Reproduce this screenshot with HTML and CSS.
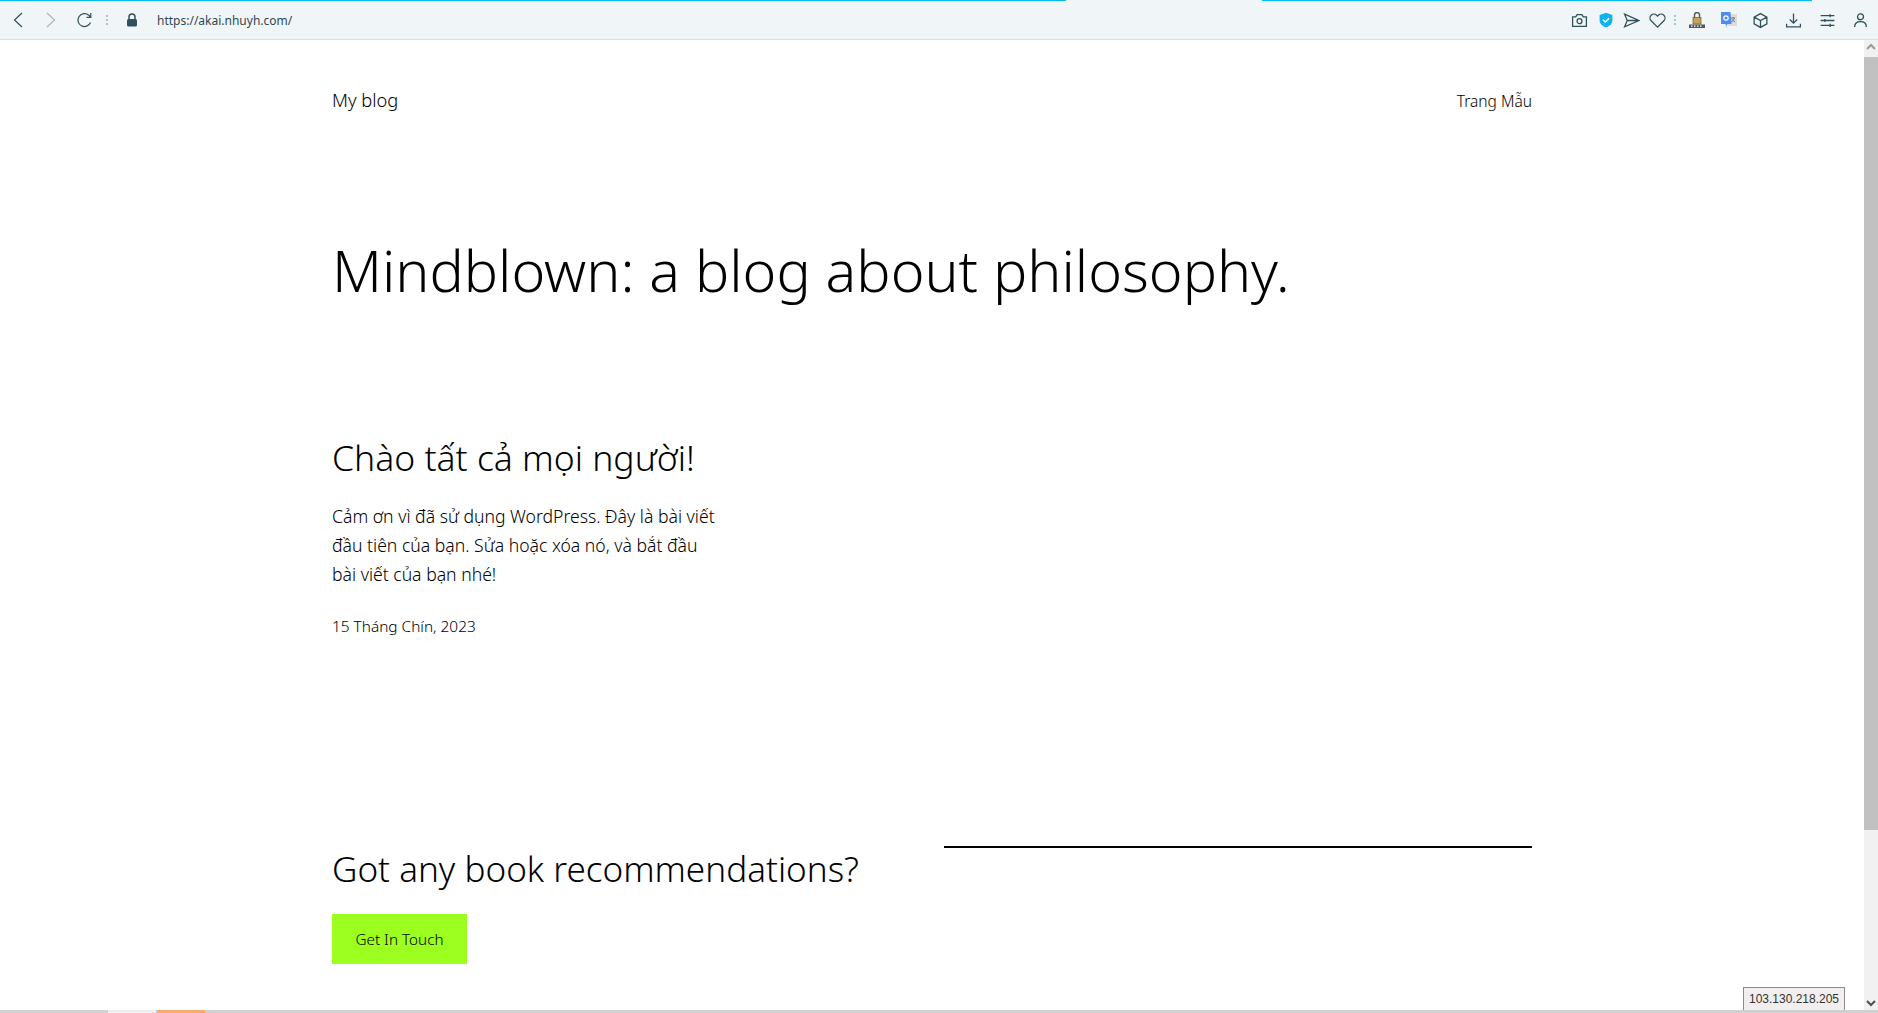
FILE: index.html
```html
<!DOCTYPE html>
<html lang="en">
<head>
    <meta charset="UTF-8">
    <meta name="viewport" content="width=device-width, initial-scale=1.0">
    <title>My blog</title>
    <link rel="stylesheet" href="styles.css">
</head>
<body>
    <div class="app">
        <!-- Browser toolbar -->
        <div class="toolbar">
            <div class="progress">
                <span class="progress-a"></span>
                <span class="progress-b"></span>
            </div>
            <div class="toolbar-row">
                <div class="nav-icons">
                    <svg class="icon back" viewBox="0 0 16 16"><path d="M12 1 4.500 8l7.500 7"/></svg>
                    <svg class="icon forward" viewBox="0 0 16 16"><path d="m4 1 7.500 7L4 15"/></svg>
                    <svg class="icon reload" viewBox="0 0 16 16"><path d="M14.500 10.500A6.500 6.500 0 1 1 12.800 3.200L14.500 5M14.800 1v4.300h-4.300"/></svg>
                    <span class="dots"></span>
                    <svg class="lock" viewBox="0 0 12 14"><path class="shackle" d="M3 6.500V4a3 3 0 0 1 6 0v2.500"/><rect x="1" y="6" width="10" height="7.500" rx="1.500"/></svg>
                    <span class="url">https://akai.nhuyh.com/</span>
                </div>
                <div class="tool-icons">
                    <svg class="icon camera" viewBox="0 0 16 16"><path d="M1.500 4.500h3l1.200-2h4.600l1.200 2h3v9h-13z"/><circle cx="8" cy="8.600" r="2.300"/></svg>
                    <svg class="shield" viewBox="0 0 14 16"><path d="M7 .8 13.400 3v5.400c0 3.400-2.800 5.700-6.400 6.900C3.400 14.100.6 11.800.6 8.400V3z"/><path class="tick" d="m4 7.800 2.200 2.200L10 6.400"/></svg>
                    <svg class="icon send" viewBox="0 0 16 16"><path d="M1.500 2 15 8 1.500 14 4 8zM4 8h11"/></svg>
                    <svg class="icon heart" viewBox="0 0 16 16"><path d="M8 14.200 2 8.300a3.700 3.700 0 0 1 0-5.200 3.700 3.700 0 0 1 5.200 0l.8.800.8-.8a3.700 3.700 0 0 1 5.200 0 3.700 3.700 0 0 1 0 5.200z"/></svg>
                    <span class="dots"></span>
                    <svg class="ext-lock" viewBox="0 0 16 16"><path class="ext-shackle" d="M5.500 6V3a2.500 2.500 0 0 1 5 0v3"/><rect x="4" y="5.500" width="8" height="6.500" fill="#c9a24f" stroke="#6b5a35" stroke-width=".7"/><rect x="0" y="12.500" width="16" height="3.500" fill="#55565c"/><path d="M2 14.200h1.500M5 14.200h1.500M8 14.200h1.500M11 14.200h1.500" stroke="#fff" stroke-width="1.200"/></svg>
                    <svg class="ext-translate" viewBox="0 0 16 16"><rect x="7" y="2" width="9" height="12" fill="#dcdcdc"/><path d="m10 6 4 0m-2-1v1m1.500 0c-.5 2-2 3.500-3.500 4m1-3c.5 1 1.500 2 3 3" stroke="#666" stroke-width=".8" fill="none"/><path d="M0 0h9.500l1 12H7l-1.500 1V16l-1-4H0z" fill="#4f8bf0"/><circle cx="5" cy="6" r="2.200" fill="none" stroke="#fff" stroke-width="1.200"/></svg>
                    <svg class="icon box" viewBox="0 0 16 16"><path d="M8 1.500 14 4.800v6.400L8 14.500l-6-3.300V4.800zM2 4.800 8 8l6-3.200M8 8v6.500"/></svg>
                    <svg class="icon download" viewBox="0 0 16 16"><path d="M8 1.500v9M4.500 7 8 10.500 11.500 7M1.500 11v3h13v-3"/></svg>
                    <svg class="icon sliders" viewBox="0 0 16 16"><path d="M1.500 3.500h13M1.500 8h13M1.500 12.500h13M10.500 2v3M5.500 6.500v3M10.500 11v3"/></svg>
                    <svg class="icon user" viewBox="0 0 16 16"><circle cx="8" cy="4.500" r="2.800"/><path d="M2.500 14c0-3 2.200-5 5.500-5s5.500 2 5.500 5"/></svg>
                </div>
            </div>
        </div>

        <div class="viewport">
            <div class="page">
                <header class="site-header">
                    <a class="site-title">My blog</a>
                    <a class="site-nav">Trang Mẫu</a>
                </header>

                <h1 class="tagline">Mindblown: a blog about philosophy.</h1>

                <div class="posts">
                    <article class="post">
                        <h2>Chào tất cả mọi người!</h2>
                        <p>Cảm ơn vì đã sử dụng WordPress. Đây là bài viết đầu tiên của bạn. Sửa hoặc xóa nó, và bắt đầu bài viết của bạn nhé!</p>
                        <div class="post-date">15 Tháng Chín, 2023</div>
                    </article>
                </div>

                <div class="cta">
                    <div class="cta-left">
                        <h2>Got any book recommendations?</h2>
                        <a class="button">Get In Touch</a>
                    </div>
                    <hr class="cta-rule">
                </div>
            </div>

            <div class="scrollbar">
                <svg class="arrow" viewBox="0 0 14 14"><path d="m3 9 4-4 4 4"/></svg>
                <div class="thumb"></div>
                <svg class="arrow arrow-down" viewBox="0 0 14 14"><path d="m3 5 4 4 4-4"/></svg>
            </div>
        </div>

        <div class="bottom-bar">
            <span class="seg-light"></span>
            <span class="seg-orange"></span>
        </div>

        <div class="ip-badge">103.130.218.205</div>
    </div>
</body>
</html>
```

FILE: styles.css
```css
* {
    margin: 0;
    padding: 0;
    box-sizing: border-box;
}

body {
    font-family: 'Noto Sans', 'Open Sans', sans-serif;
    font-weight: 300;
    background: #fff;
    color: #000;
    height: 100vh;
    overflow: hidden;
}

.app {
    height: 100vh;
    display: flex;
    flex-direction: column;
    position: relative;
}

/* toolbar */
.toolbar {
    height: 40px;
    flex: none;
    background: #f0f6f7;
    border-bottom: 1px solid #d8e2e4;
}

.progress {
    height: 1px;
    display: flex;
}

.progress-a {
    width: 1066px;
    background: #00bdea;
}

.progress-b {
    width: 550px;
    margin-left: 196px;
    background: #00bdea;
}

.toolbar-row {
    height: 38px;
    display: flex;
    justify-content: space-between;
    align-items: center;
    padding: 0 9px 0 10px;
}

.nav-icons,
.tool-icons {
    display: flex;
    align-items: center;
}

.icon {
    width: 16px;
    height: 16px;
    flex: none;
    fill: none;
    stroke: #32505a;
    stroke-width: 1.2;
}

.back {
    margin-right: 17px;
}

.forward {
    margin-right: 17px;
    stroke: #a8b6ba;
}

.reload {
    margin-right: 14px;
}

.dots {
    width: 2px;
    height: 10px;
    flex: none;
    background: repeating-linear-gradient(#b4c0c4 0 2px, transparent 2px 4px);
}

.nav-icons .dots {
    margin-right: 18px;
}

.lock {
    width: 12px;
    height: 14px;
    margin-right: 19px;
    fill: #32505a;
}

.shackle {
    fill: none;
    stroke: #32505a;
    stroke-width: 1.5;
}

.url {
    font-size: 12px;
    font-weight: 400;
    color: #32474f;
}

.tool-icons .icon {
    width: 17px;
    height: 17px;
}

.tool-icons .camera {
    margin-right: 11px;
}

.shield {
    width: 14px;
    height: 16px;
    margin-right: 10px;
    fill: #0fb4ee;
}

.tick {
    fill: none;
    stroke: #fff;
    stroke-width: 1.5;
}

.tool-icons .send {
    margin-right: 9px;
}

.tool-icons .heart {
    margin-right: 8px;
}

.tool-icons .dots {
    margin-right: 13px;
}

.ext-lock {
    width: 16px;
    height: 16px;
    margin-right: 16px;
}

.ext-shackle {
    fill: none;
    stroke: #555;
    stroke-width: 1.4;
}

.ext-translate {
    width: 16px;
    height: 16px;
    margin-right: 15px;
}

.tool-icons .box {
    margin-right: 16px;
}

.tool-icons .download {
    margin-right: 17px;
}

.tool-icons .sliders {
    margin-right: 16px;
}

/* page area */
.viewport {
    flex: 1;
    min-height: 0;
    display: flex;
}

.page {
    flex: 1;
    padding: 0 332px;
}

.site-header {
    display: flex;
    justify-content: space-between;
    align-items: center;
    padding-top: 47px;
    height: 75px;
}

.site-title {
    font-size: 18.3px;
    padding-bottom: 3px;
}

.site-nav {
    font-size: 15.5px;
}

.tagline {
    font-size: 57.3px;
    font-weight: 300;
    line-height: 72px;
    margin-top: 119px;
}

.posts {
    margin-top: 127px;
    display: grid;
    grid-template-columns: repeat(3, 1fr);
    gap: 20px;
}

.post h2 {
    font-size: 35.5px;
    font-weight: 300;
    line-height: 48px;
}

.post p {
    font-size: 17.6px;
    line-height: 29px;
    margin-top: 21px;
}

.post-date {
    font-size: 15.4px;
    line-height: 22px;
    margin-top: 27px;
}

.cta {
    margin-top: 206px;
    display: flex;
    justify-content: space-between;
    align-items: flex-start;
}

.cta-left h2 {
    font-size: 35.1px;
    font-weight: 300;
    line-height: 48px;
}

.button {
    display: block;
    width: 135px;
    height: 50px;
    margin-top: 22px;
    background: #9dff20;
    font-size: 15.3px;
    line-height: 50px;
    text-align: center;
}

.cta-rule {
    width: 588px;
    margin-top: 2px;
    border: none;
    border-top: 2px solid #000;
}

/* scrollbar */
.scrollbar {
    width: 14px;
    flex: none;
    background: #f1f1f1;
    display: flex;
    flex-direction: column;
}

.arrow {
    width: 14px;
    height: 14px;
    flex: none;
    fill: none;
    stroke: #9a9a9a;
    stroke-width: 2;
}

.arrow-down {
    margin-top: auto;
    stroke: #505050;
}

.thumb {
    height: 773px;
    margin-top: 3px;
    background: #c1c1c1;
}

/* bottom strip */
.bottom-bar {
    height: 3px;
    flex: none;
    background: #d0d0d0;
    display: flex;
}

.seg-light {
    width: 48px;
    margin-left: 108px;
    margin-right: 1px;
    background: #eeeeee;
}

.seg-orange {
    width: 48px;
    background: #f7ab6e;
}

.ip-badge {
    position: absolute;
    right: 33px;
    bottom: 3px;
    width: 102px;
    height: 23px;
    background: #f2eeee;
    border: 1px solid #8c8c8c;
    border-bottom: none;
    font-family: 'Liberation Sans', Arial, sans-serif;
    font-size: 12px;
    font-weight: 400;
    line-height: 22px;
    text-align: center;
    color: #333;
}
```
